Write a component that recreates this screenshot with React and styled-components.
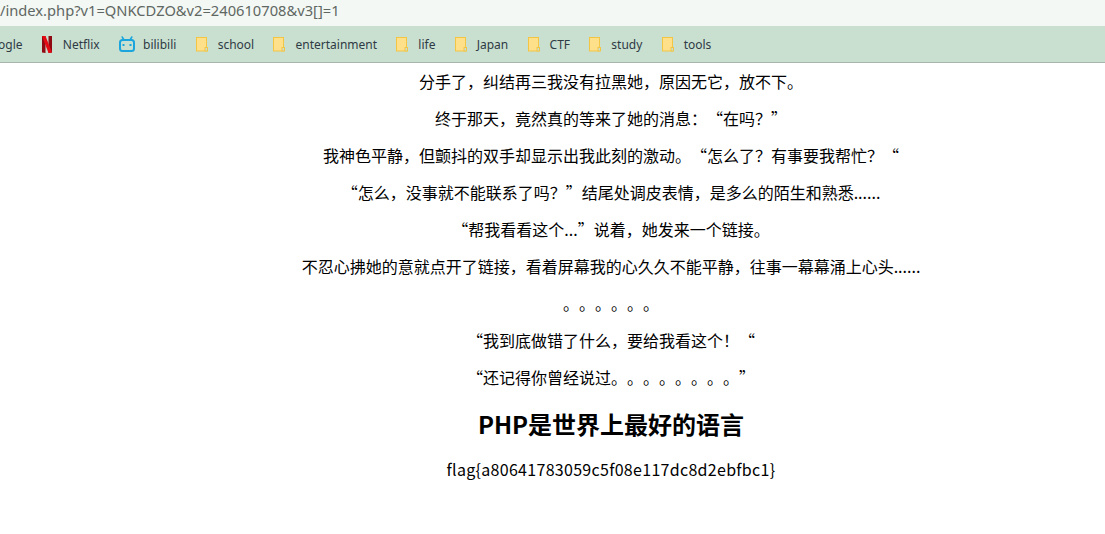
import React from 'react';
import styled, { createGlobalStyle } from 'styled-components';

const GlobalStyle = createGlobalStyle`
  html, body {
    margin: 0;
    padding: 0;
    background: #fff;
    overflow: hidden;
  }
`;

const Page = styled.div`
  width: 1105px;
  height: 534px;
  overflow: hidden;
  font-family: "Noto Sans CJK SC", "Noto Sans", sans-serif;
`;

const AddressBar = styled.div`
  height: 26px;
  background: #f3f8f4;
  color: #5f6763;
  font-family: "Noto Sans", "Open Sans", sans-serif;
  font-size: 14.7px;
  line-height: 21px;
  white-space: nowrap;
  overflow: hidden;
`;

const Bookmarks = styled.div`
  height: 37px;
  box-sizing: border-box;
  background: #c9e0d1;
  border-bottom: 1px solid #a7b5ac;
  display: flex;
  align-items: center;
  gap: 19.3px;
  overflow: hidden;
`;

const Bookmark = styled.div`
  display: flex;
  align-items: center;
  flex: none;
  gap: ${p => p.$gap}px;
  font-family: "Noto Sans", "Open Sans", sans-serif;
  font-size: 12px;
  color: #2f3a44;
  white-space: nowrap;
`;

const CutOffBookmark = styled(Bookmark)`
  margin-left: -2px;
`;

const Article = styled.main`
  width: 1222px;
  text-align: center;
  color: #000;
`;

const Line = styled.p`
  margin: 0;
  height: 37px;
  line-height: 37px;
  font-size: 16px;
  text-spacing-trim: space-all;
`;

const Heading = styled.h2`
  margin: 0;
  height: 56px;
  line-height: 56px;
  font-size: 24px;
  font-weight: 700;
`;

const Flag = styled.p`
  margin: 0;
  line-height: 34px;
  font-size: 16px;
  letter-spacing: 0.3px;
`;

const FolderIcon = () => (
  <svg width="12" height="15" viewBox="0 0 12 15">
    <rect x="0.5" y="0.5" width="10" height="13.5" fill="#fee08b" stroke="#f3c544" />
    <rect x="9" y="10.500" width="2.500" height="3.500" fill="#c9e0d1" stroke="#f3c544" />
  </svg>
);

const NetflixIcon = () => (
  <svg width="10" height="17" viewBox="0 0 10 17">
    <path d="M0 0h3.500v17L0 16.500z" fill="#8f0a12" />
    <path d="M6.500 0H10v16.500L6.500 17z" fill="#8f0a12" />
    <path d="M0 0h3.500L10 16.500 6.500 17z" fill="#e50914" />
  </svg>
);

const BilibiliIcon = () => (
  <svg width="16" height="16" viewBox="0 0 16 16" fill="none">
    <path d="M5 4L3.200 1M11 4l1.800-3" stroke="#1ba5dc" strokeWidth="1.500" strokeLinecap="round" />
    <rect x="1" y="4" width="14" height="11" rx="2.500" stroke="#1ba5dc" strokeWidth="2" />
    <path d="M4.500 8v2M11.500 8v2" stroke="#1ba5dc" strokeWidth="2" />
  </svg>
);

const folders = ['school', 'entertainment', 'life', 'Japan', 'CTF', 'study', 'tools'];

const lines = [
  '分手了，纠结再三我没有拉黑她，原因无它，放不下。',
  '终于那天，竟然真的等来了她的消息：“在吗？”',
  '我神色平静，但颤抖的双手却显示出我此刻的激动。“怎么了？有事要我帮忙？“',
  '“怎么，没事就不能联系了吗？”结尾处调皮表情，是多么的陌生和熟悉......',
  '“帮我看看这个...”说着，她发来一个链接。',
  '不忍心拂她的意就点开了链接，看着屏幕我的心久久不能平静，往事一幕幕涌上心头......',
  '。。。。。。',
  '“我到底做错了什么，要给我看这个！“',
  '“还记得你曾经说过。。。。。。。。”',
];

export default function App() {
  return (
    <Page>
      <GlobalStyle />
      <AddressBar>/index.php?v1=QNKCDZO&amp;v2=240610708&amp;v3[]=1</AddressBar>
      <Bookmarks>
        <CutOffBookmark $gap={0}>ogle</CutOffBookmark>
        <Bookmark $gap={11}><NetflixIcon />Netflix</Bookmark>
        <Bookmark $gap={8}><BilibiliIcon />bilibili</Bookmark>
        {folders.map(name => (
          <Bookmark key={name} $gap={10}><FolderIcon />{name}</Bookmark>
        ))}
      </Bookmarks>
      <Article>
        {lines.map(l => <Line key={l}>{l}</Line>)}
        <Heading>PHP是世界上最好的语言</Heading>
        <Flag>flag{'{'}a80641783059c5f08e117dc8d2ebfbc1{'}'}</Flag>
      </Article>
    </Page>
  );
}
